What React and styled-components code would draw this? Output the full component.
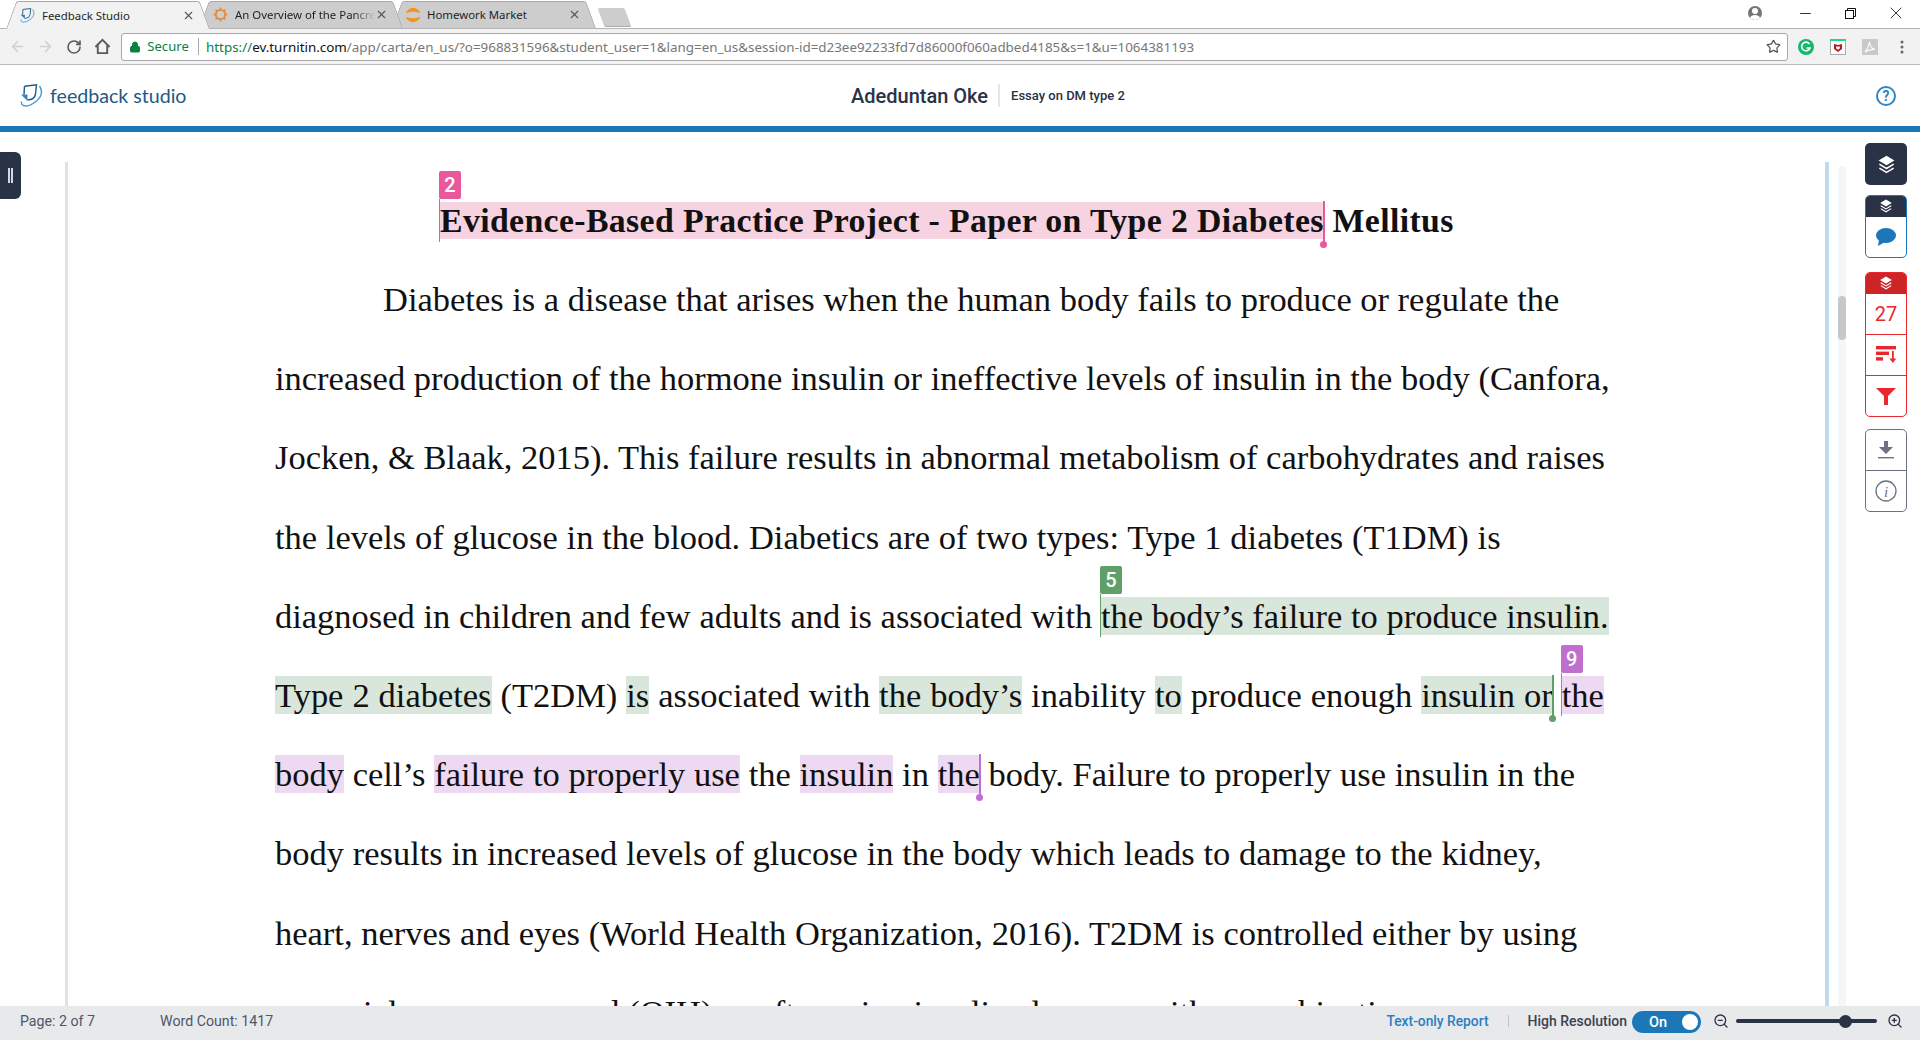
import React from "react";
import styled, { createGlobalStyle } from "styled-components";
import { ArrowLeft, ArrowRight, RotateCw, Lock, Star, Minus, X, ZoomIn, ZoomOut } from "lucide-react";

const Global = createGlobalStyle`
  html, body { margin: 0; padding: 0; background: #fff; overflow: hidden; }
  #root { height: 1040px; }
  * { box-sizing: border-box; }
`;

const Shell = styled.div`
  height: 1040px; width: 1920px; display: flex; flex-direction: column; overflow: hidden;
  font-family: Roboto, sans-serif;
`;

/* browser chrome */
const TabStrip = styled.div`
  height: 29px; display: flex; align-items: flex-end; padding: 1px 0 0 6px; position: relative; background: #fff;
  border-bottom: 1px solid #b4b4b4;
`;
const Tab = styled.div`
  position: relative; width: 204px; height: ${p => p.$active ? 28 : 27}px; margin-left: ${p => p.$first ? 0 : -11}px;
  margin-bottom: ${p => p.$active ? -1 : 0}px; z-index: ${p => p.$z};
  display: flex; align-items: center; padding: 0 15px 0 14px; isolation: isolate;
  font: 11.4px "Noto Sans", sans-serif; color: #1f1f1f;
  &::before, &::after {
    content: ""; position: absolute; top: 0; bottom: 0; width: 55%; z-index: -1;
    background: ${p => p.$active ? "#f2f2f2" : "#cdcdcd"};
    border-top: 1px solid #a8a8a8;
  }
  &::before { left: 0; border-left: 1px solid #a8a8a8; transform: skewX(-20deg); transform-origin: bottom left; border-radius: 3px 0 0 0; }
  &::after { right: 0; border-right: 1px solid #a8a8a8; transform: skewX(20deg); transform-origin: bottom right; border-radius: 0 3px 0 0; }
`;
const TabTitle = styled.span`
  margin-left: 7px; flex: 1; white-space: nowrap; overflow: hidden;
  ${p => p.$fade ? "mask-image: linear-gradient(90deg, #000 85%, transparent 100%);" : ""}
`;
const NewTab = styled.div`
  width: 27px; height: 19px; margin: 0 0 1px 5px; background: #cdcdcd; border-radius: 2px;
  border-bottom: 1px solid #aaa; transform: skewX(20deg);
`;
const WindowControls = styled.div`
  position: absolute; top: 2px; right: 2px; display: flex; align-items: center; height: 22px; color: #111;
`;
const Control = styled.span`
  width: 45px; display: flex; justify-content: center; align-items: center;
`;
const Avatar = styled.span`
  width: 14px; height: 14px; margin-right: 21px; background: #757575; border-radius: 50%; position: relative; overflow: hidden;
  &::before { content: ""; position: absolute; left: 4px; top: 2px; width: 6px; height: 6px; background: #fff; border-radius: 50%; }
  &::after { content: ""; position: absolute; left: 2px; top: 9px; width: 10px; height: 6px; background: #fff; border-radius: 50%; }
`;
const Toolbar = styled.div`
  height: 36px; background: #f2f2f2; border-bottom: 1px solid #b8b8b8; display: flex; align-items: center; padding-left: 3px;
`;
const NavButton = styled.span`
  width: 28.3px; display: flex; justify-content: center; color: ${p => p.$off ? "#cfcfcf" : "#5a5a5a"};
`;
const Omnibox = styled.div`
  margin-left: 5px; width: 1667px; height: 28px; background: #fff; border: 1px solid #a9a9a9; border-radius: 3px;
  display: flex; align-items: center; padding-left: 7px; font: 13px "Noto Sans", sans-serif; white-space: nowrap; position: relative;
`;
const Secure = styled.span`
  color: #0b8043; margin-left: 6px; padding-right: 9px; border-right: 1px solid #a9a9a9; line-height: 17px; letter-spacing: .1px;
`;
const Url = styled.span`
  margin-left: 7px; color: #777; font-size: 13.4px;
  b { font-weight: 400; color: #0b8043; } i { font-style: normal; color: #111; }
`;
const StarSlot = styled.span`
  position: absolute; right: 6px; top: 5px; color: #555; display: flex;
`;
const Extensions = styled.div`
  display: flex; align-items: center; margin-left: 2px;
`;
const Extension = styled.span`
  width: 32px; display: flex; justify-content: center; align-items: center;
`;

/* app header */
const Header = styled.header`
  height: 61px; display: grid; grid-template-columns: 851px auto auto 1fr; align-items: center; position: relative;
`;
const Brand = styled.div`
  display: flex; align-items: center; padding: 0 0 1px 20px; gap: 7px; color: #1b5b85;
  font: 400 19.6px Lato, sans-serif;
`;
const Student = styled.div`
  font: 500 20px Roboto, sans-serif; color: #2a3245; padding-right: 10px; line-height: 24px;
`;
const Assignment = styled.div`
  font: 500 13px Roboto, sans-serif; color: #2a3245; border-left: 2px solid #e6e6e6; padding-left: 11px; line-height: 23px;
`;
const Help = styled.div`
  justify-self: end; margin-right: 24px; width: 20px; height: 20px; border: 2px solid #2f86c6; border-radius: 50%;
  color: #2f86c6; font: 700 14px Roboto, sans-serif; display: flex; align-items: center; justify-content: center;
`;
const Rule = styled.div`
  height: 6px; background: #1c77b9;
`;

/* workspace */
const Workspace = styled.main`
  flex: 1; min-height: 0; display: flex; overflow: hidden;
`;
const Gutter = styled.div`
  width: 65px; padding-top: 20px;
`;
const Drawer = styled.div`
  width: 21px; height: 47px; background: #2a3245; border-radius: 0 6px 6px 0; display: flex; align-items: center; justify-content: flex-start;
  padding-left: 8px; gap: 1.4px;
`;
const DrawerLine = styled.span`
  width: 1.8px; height: 15px; background: #d5d8de;
`;
const Page = styled.section`
  width: 1764px; margin-top: 30px; border-left: 3px solid #e2e2e2; border-right: 4px solid #bfd9ef; overflow: hidden;
  padding: 39px 0 0 207px;
  font-family: "Liberation Serif", "Times New Roman", serif; color: #111;
`;
const Title = styled.h1`
  margin: 0 0 19px; padding-left: 165px; font-size: 33.8px; font-weight: 700; line-height: 40px; white-space: pre; letter-spacing: .36px;
`;
const Line = styled.div`
  font-size: 34.47px; line-height: 79.2px; height: 79.2px; white-space: pre;
  padding-left: ${p => p.$indent || 0}px; word-spacing: ${p => p.$spread || 0}px;
`;
const tones = {
  pink: { bg: "#f7d3e2", c: "#e8589a" },
  green: { bg: "#d9e6db", c: "#609f68" },
  purple: { bg: "#edd9f2", c: "#c06fcf" },
};
const Mark = styled.span`
  position: relative; background: ${p => tones[p.$tone].bg};
`;
const Flag = styled.span`
  position: absolute; left: ${p => p.$left ?? -1}px; bottom: calc(100% + 3px); width: 22px; height: 28px; border-radius: 2px;
  background: ${p => tones[p.$tone].c}; color: #fff; font: 500 20px/28px Roboto, sans-serif; text-align: center;
  &::after { content: ""; position: absolute; left: 0; top: 100%; width: 1px; height: 43px; background: ${p => tones[p.$tone].c}; }
`;
const EndMark = styled.span`
  position: absolute; right: ${p => p.$right ?? -1}px; top: -1px; width: 1.5px; height: 44px; background: ${p => tones[p.$tone].c};
  &::after { content: ""; position: absolute; left: -3px; bottom: -3px; width: 7px; height: 7px; border-radius: 50%; background: ${p => tones[p.$tone].c}; }
`;

const Track = styled.div`
  width: 8px; margin: 34px 0 0 9px; background: #f5f6f6; border-radius: 4px 4px 0 0; position: relative;
`;
const Thumb = styled.div`
  position: absolute; left: 0; top: 130px; width: 8px; height: 44px; background: #c8c8c8; border-radius: 4px;
`;
const Rail = styled.aside`
  width: 42px; margin-left: 19px; padding-top: 11px; display: flex; flex-direction: column; align-items: stretch;
`;
const Group = styled.div`
  border: ${p => p.$color ? `1px solid ${p.$color}` : "none"}; border-radius: 5px; overflow: hidden; margin-bottom: ${p => p.$gap}px; background: #fff;
`;
const GroupHead = styled.div`
  height: ${p => p.$h}px; background: ${p => p.$bg}; display: flex; align-items: center; justify-content: center; margin: ${p => p.$bleed ? "-1px -1px 0" : 0};
`;
const Cell = styled.div`
  height: ${p => p.$h}px; display: flex; align-items: center; justify-content: center; color: ${p => p.$color};
  border-top: ${p => p.$line ? `1px solid ${p.$line}` : "none"}; font: 400 20px Roboto, sans-serif;
`;

/* status bar */
const Status = styled.footer`
  height: 34px; background: #e7e9eb; display: flex; align-items: center; font: 400 14.2px Roboto, sans-serif; color: #50566a; padding: 0 0 4px 20px;
`;
const Count = styled.span`
  margin-left: 65px;
`;
const StatusRight = styled.div`
  margin-left: auto; display: flex; align-items: center; padding-right: 17px;
`;
const ReportLink = styled.span`
  color: #2a80c4; font-weight: 500; font-size: 13.8px;
`;
const Divider = styled.span`
  width: 1px; height: 12px; background: #c0c3c8; margin: 0 19px;
`;
const ResLabel = styled.span`
  color: #3c4252; font-weight: 500; font-size: 14px; margin-right: 5px;
`;
const Toggle = styled.span`
  width: 69px; height: 22px; border-radius: 11px; background: #1c77b9; color: #fff; font-size: 14.5px; font-weight: 500; display: flex; align-items: center; padding-left: 17px; position: relative; margin-bottom: -2px;
  &::after { content: ""; position: absolute; right: 3px; top: 3px; width: 16px; height: 16px; background: #fff; border-radius: 50%; }
`;
const Slider = styled.span`
  width: 141px; height: 4px; border-radius: 2px; background: #2a3245; position: relative; margin: 0 10px 0 7px;
  &::after { content: ""; position: absolute; left: 103px; width: 13px; height: 13px; top: -4.5px; background: #2a3245; border-radius: 50%; }
`;
const ZoomSlot = styled.span`
  display: flex; color: #2a3245; margin-left: ${p => p.$ml || 0}px;
`;

const Stack = ({ size = 19, color = "#fff" }) => (
  <svg width={size} height={size} viewBox="0 0 24 24" fill="none">
    <path d="M12 1 L22 7 L12 13 L2 7 Z" fill={color} />
    <path d="M3 11.5 L12 17 L21 11.5 M3 16.5 L12 22 L21 16.5" stroke={color} strokeWidth="2" />
  </svg>
);
const Logo = ({ size = 23 }) => (
  <svg width={size} height={size} viewBox="0 0 23 23" fill="none">
    <path d="M4.5 2.2 L16.5 .8 L15.5 10 Q14.5 15.5 9 15.8 L7.5 15.8" stroke="#1b5b85" strokeWidth="1.4" />
    <path d="M4.5 2.2 L4 10.5" stroke="#1b5b85" strokeWidth="1.4" />
    <path d="M19.5 2 Q24.5 9.5 17 16.5 Q9 23.5 3.5 21.5 Q1 20.5 1.5 17.5" stroke="#4a9ad4" strokeWidth="1.4" />
    <path d="M1 10.5 L7.5 10.5 L7.5 17 Z" fill="#2f86c6" />
  </svg>
);
const Gear = () => (
  <svg width="15" height="15" viewBox="0 0 16 16" fill="none">
    <circle cx="8" cy="8" r="5" stroke="#e58a3b" strokeWidth="2" />
    <path d="M8 0.5V3M8 13V15.5M0.5 8H3M13 8H15.5M2.7 2.7L4.5 4.5M11.5 11.5L13.3 13.3M13.3 2.7L11.5 4.5M4.5 11.5L2.7 13.3" stroke="#e58a3b" strokeWidth="1.6" />
  </svg>
);
const HomeworkIcon = () => (
  <svg width="14" height="16" viewBox="0 0 14 16" fill="none">
    <path d="M1 5 Q7 -2 13 5 Q7 3 1 5Z M1 11 Q7 18 13 11 Q7 13 1 11Z" fill="#f39420" stroke="#f39420" strokeWidth="1.5" />
  </svg>
);
const HomeIcon = () => (
  <svg width="17" height="17" viewBox="0 0 18 18" fill="none" stroke="#5a5a5a" strokeWidth="2">
    <path d="M1.5 9.5 L9 2 L16.5 9.5 M4 8 V16 H14 V8" />
  </svg>
);
const Grammarly = () => (
  <svg width="16" height="16" viewBox="0 0 16 16">
    <circle cx="8" cy="8" r="8" fill="#15b86f" />
    <path d="M11.5 5 A4.3 4.3 0 1 0 12 9 L8.5 9" fill="none" stroke="#fff" strokeWidth="1.7" />
  </svg>
);
const McAfee = () => (
  <svg width="16" height="16" viewBox="0 0 16 16">
    <rect x=".5" y=".5" width="15" height="15" fill="#fff" stroke="#aaa" />
    <rect width="16" height="2" fill="#1fd98a" />
    <path d="M4 5 L8 6 L12 5 V10 L8 13 L4 10 Z M6.2 7.2 V9.6 L8 10.8 L9.8 9.6 V7.2 L8 7.8 Z" fill="#b9171c" fillRule="evenodd" />
  </svg>
);
const Pdf = () => (
  <svg width="16" height="16" viewBox="0 0 16 16">
    <rect width="16" height="16" fill="#c9c9c9" />
    <path d="M3 13 Q7 8 7.5 3 Q8 9 13 10.5 Q7.5 9.8 3 13Z" fill="none" stroke="#fff" strokeWidth="1.1" />
  </svg>
);
const Dots = () => (
  <svg width="4" height="14" viewBox="0 0 4 14" fill="#666">
    <circle cx="2" cy="2" r="1.5" /><circle cx="2" cy="7" r="1.5" /><circle cx="2" cy="12" r="1.5" />
  </svg>
);
const RestoreIcon = () => (
  <svg width="11" height="11" viewBox="0 0 11 11" fill="none" stroke="#111">
    <rect x=".5" y="2.5" width="8" height="8" /><path d="M2.5 2.5 V.5 H10.5 V8.5 H8.5" />
  </svg>
);
const Bubble = () => (
  <svg width="22" height="18" viewBox="0 0 22 18">
    <ellipse cx="11" cy="7.5" rx="10" ry="7.5" fill="#1c77b9" />
    <path d="M4 12 L3 18 L10 14 Z" fill="#1c77b9" />
  </svg>
);
const SortIcon = () => (
  <svg width="21" height="18" viewBox="0 0 21 18" fill="#e8282c">
    <rect x="0" y="0" width="20" height="3.4" />
    <rect x="0" y="5.6" width="13" height="3.4" />
    <rect x="0" y="11.2" width="7" height="3.4" />
    <rect x="16" y="5" width="1.8" height="9" />
    <path d="M13.5 12.5 H20.3 L16.9 17 Z" />
  </svg>
);
const FunnelIcon = () => (
  <svg width="20" height="17" viewBox="0 0 20 17" fill="#e8282c">
    <path d="M0 0 H20 L12 8 V17 H8 V8 Z" />
  </svg>
);
const DownloadIcon = () => (
  <svg width="16" height="18" viewBox="0 0 16 18" fill="#6b7280">
    <path d="M6 0 H10 V6 H15 L8 13 L1 6 H6 Z" />
    <rect y="16" width="16" height="1.4" />
  </svg>
);
const InfoIcon = () => (
  <svg width="22" height="22" viewBox="0 0 22 22" fill="none" stroke="#6b7280" strokeWidth="1.3">
    <circle cx="11" cy="11" r="10" />
    <text x="11" y="16.5" textAnchor="middle" fontFamily="Liberation Serif, serif" fontStyle="italic" fontSize="15" fill="#6b7280" stroke="none">i</text>
  </svg>
);

export default function App() {
  return (
    <Shell>
      <Global />
      <TabStrip>
        <Tab $active $first $z={3}><Logo size={15} /><TabTitle>Feedback Studio</TabTitle><X size={13} color="#555" /></Tab>
        <Tab $z={2}><Gear /><TabTitle $fade>An Overview of the Pancreas</TabTitle><X size={13} color="#555" /></Tab>
        <Tab $z={1}><HomeworkIcon /><TabTitle>Homework Market</TabTitle><X size={13} color="#555" /></Tab>
        <NewTab />
        <WindowControls>
          <Avatar />
          <Control><Minus size={17} strokeWidth={1.2} /></Control>
          <Control><RestoreIcon /></Control>
          <Control><X size={20} strokeWidth={1} /></Control>
        </WindowControls>
      </TabStrip>
      <Toolbar>
        <NavButton $off><ArrowLeft size={17} /></NavButton>
        <NavButton $off><ArrowRight size={17} /></NavButton>
        <NavButton><RotateCw size={16} strokeWidth={2.4} /></NavButton>
        <NavButton><HomeIcon /></NavButton>
        <Omnibox>
          <Lock size={12} color="#0b8043" fill="#0b8043" />
          <Secure>Secure</Secure>
          <Url><b>https://</b><i>ev.turnitin.com</i>/app/carta/en_us/?o=968831596&amp;student_user=1&amp;lang=en_us&amp;session-id=d23ee92233fd7d86000f060adbed4185&amp;s=1&amp;u=1064381193</Url>
          <StarSlot><Star size={15} strokeWidth={2} /></StarSlot>
        </Omnibox>
        <Extensions>
          <Extension><Grammarly /></Extension>
          <Extension><McAfee /></Extension>
          <Extension><Pdf /></Extension>
          <Extension><Dots /></Extension>
        </Extensions>
      </Toolbar>
      <Header>
        <Brand><Logo />feedback studio</Brand>
        <Student>Adeduntan Oke</Student>
        <Assignment>Essay on DM type 2</Assignment>
        <Help>?</Help>
      </Header>
      <Rule />
      <Workspace>
        <Gutter><Drawer><DrawerLine /><DrawerLine /></Drawer></Gutter>
        <Page>
          <Title><Mark $tone="pink"><Flag $tone="pink">2</Flag>Evidence-Based Practice Project - Paper on Type 2 Diabetes<EndMark $tone="pink" /></Mark> Mellitus</Title>
          <Line $indent={108}>Diabetes is a disease that arises when the human body fails to produce or regulate the</Line>
          <Line>increased production of the hormone insulin or ineffective levels of insulin in the body (Canfora,</Line>
          <Line>Jocken, &amp; Blaak, 2015). This failure results in abnormal metabolism of carbohydrates and raises</Line>
          <Line $spread={.15}>the levels of glucose in the blood. Diabetics are of two types: Type 1 diabetes (T1DM) is</Line>
          <Line $spread={.08}>diagnosed in children and few adults and is associated with <Mark $tone="green"><Flag $tone="green">5</Flag>the body’s failure to produce insulin.</Mark></Line>
          <Line $spread={.35}><Mark $tone="green">Type 2 diabetes</Mark> (T2DM) <Mark $tone="green">is</Mark> associated with <Mark $tone="green">the body’s</Mark> inability <Mark $tone="green">to</Mark> produce enough <Mark $tone="green">insulin or<EndMark $tone="green" /></Mark> <Mark $tone="purple"><Flag $tone="purple">9</Flag>the</Mark></Line>
          <Line $spread={.13}><Mark $tone="purple">body</Mark> cell’s <Mark $tone="purple">failure to properly use</Mark> the <Mark $tone="purple">insulin</Mark> in <Mark $tone="purple">the<EndMark $tone="purple" /></Mark> body. Failure to properly use insulin in the</Line>
          <Line $spread={.15}>body results in increased levels of glucose in the body which leads to damage to the kidney,</Line>
          <Line $spread={.2}>heart, nerves and eyes (World Health Organization, 2016). T2DM is controlled either by using</Line>
          <Line>sensorial core compound (OIH) or after using insulin alone, or with a combination</Line>
        </Page>
        <Track><Thumb /></Track>
        <Rail>
          <Group $gap={10}><GroupHead $h={42} $bg="#2a3245"><Stack /></GroupHead></Group>
          <Group $gap={14} $color="#1c77b9">
            <GroupHead $h={22} $bg="#2a3245" $bleed><Stack size={14} /></GroupHead>
            <Cell $h={40}><Bubble /></Cell>
          </Group>
          <Group $gap={12} $color="#e8282c">
            <GroupHead $h={22} $bg="#cc2427" $bleed><Stack size={14} /></GroupHead>
            <Cell $h={40} $color="#e8282c">27</Cell>
            <Cell $h={41} $line="#e8282c"><SortIcon /></Cell>
            <Cell $h={41} $line="#e8282c"><FunnelIcon /></Cell>
          </Group>
          <Group $gap={0} $color="#6b7280">
            <Cell $h={40}><DownloadIcon /></Cell>
            <Cell $h={41} $line="#6b7280"><InfoIcon /></Cell>
          </Group>
        </Rail>
      </Workspace>
      <Status>
        <span>Page: 2 of 7</span>
        <Count>Word Count: 1417</Count>
        <StatusRight>
          <ReportLink>Text-only Report</ReportLink>
          <Divider />
          <ResLabel>High Resolution</ResLabel>
          <Toggle>On</Toggle>
          <ZoomSlot $ml={12}><ZoomOut size={16} /></ZoomSlot>
          <Slider />
          <ZoomSlot><ZoomIn size={16} /></ZoomSlot>
        </StatusRight>
      </Status>
    </Shell>
  );
}
